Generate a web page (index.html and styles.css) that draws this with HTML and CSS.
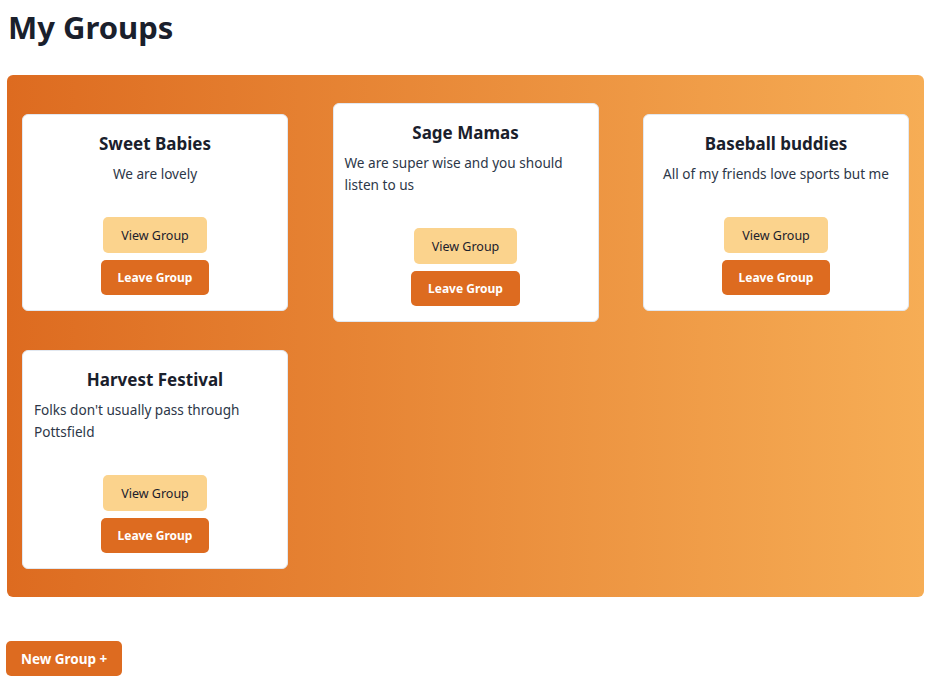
FILE: index.html
```html
<!DOCTYPE html>
<html lang="en">
<head>
<meta charset="utf-8">
<title>My Groups</title>
<link rel="stylesheet" href="styles.css">
</head>
<body>
<h1 class="page-title">My Groups</h1>
<section class="groups">
  <div class="card">
    <h2 class="card-title">Sweet Babies</h2>
    <p class="card-desc">We are lovely</p>
    <div class="card-actions">
      <button class="btn btn-view">View Group</button>
      <button class="btn btn-leave">Leave Group</button>
    </div>
  </div>
  <div class="card">
    <h2 class="card-title">Sage Mamas</h2>
    <p class="card-desc">We are super wise and you should listen to us</p>
    <div class="card-actions">
      <button class="btn btn-view">View Group</button>
      <button class="btn btn-leave">Leave Group</button>
    </div>
  </div>
  <div class="card">
    <h2 class="card-title">Baseball buddies</h2>
    <p class="card-desc">All of my friends love sports but me</p>
    <div class="card-actions">
      <button class="btn btn-view">View Group</button>
      <button class="btn btn-leave">Leave Group</button>
    </div>
  </div>
  <div class="card">
    <h2 class="card-title">Harvest Festival</h2>
    <p class="card-desc">Folks don't usually pass through Pottsfield</p>
    <div class="card-actions">
      <button class="btn btn-view">View Group</button>
      <button class="btn btn-leave">Leave Group</button>
    </div>
  </div>
</section>
<button class="btn btn-new">New Group +</button>
</body>
</html>
```
FILE: styles.css
```css
* { box-sizing: border-box; }
html, body { margin: 0; background: #fff; }
body {
  padding: 0 8px;
  font-family: "Noto Sans", "Open Sans", sans-serif;
  color: #1A202C;
}
.page-title {
  margin: 0;
  padding-top: 5px;
  height: 75px;
  font-size: 31px;
  line-height: 44px;
  font-weight: 700;
  color: #1A202C;
}
.groups {
  margin-left: -1px;
  width: 917px;
  height: 522px;
  border-radius: 6px;
  background: linear-gradient(to right, #DD6B20, #F6AD55);
  padding: 28px 15px 29px;
  display: grid;
  grid-template-columns: repeat(3, 266px);
  justify-content: space-between;
  align-items: center;
  align-content: start;
  row-gap: 28px;
}
.card {
  background: #fff;
  border: 1px solid #e2e8f0;
  border-radius: 6px;
  padding: 16px 11px 15px;
  display: flex;
  flex-direction: column;
  align-items: center;
}
.card-title {
  margin: 0;
  font-size: 17px;
  line-height: 26px;
  font-weight: 700;
  color: #1A202C;
}
.card-desc {
  margin: 6px 0 32px;
  font-size: 13.6px;
  line-height: 22px;
  color: #2D3748;
}
.card-actions {
  display: flex;
  flex-direction: column;
  align-items: center;
  gap: 7px;
}
.btn {
  border: none;
  border-radius: 5px;
  font-family: "Noto Sans", "Open Sans", sans-serif;
  font-size: 12px;
  height: 36px;
  padding: 0 18px;
  cursor: pointer;
}
.btn-view {
  background: #FBD38D;
  color: #1A202C;
  font-weight: 400;
  font-size: 12.5px;
}
.btn-leave {
  background: #DD6B20;
  color: #fff;
  font-weight: 700;
  height: 35px;
  padding: 0 17px;
}
.btn-new {
  margin: 44px 0 0 -2px;
  background: #DD6B20;
  color: #fff;
  font-weight: 700;
  font-size: 13.5px;
  height: 35px;
  padding: 0 15px;
}
```
